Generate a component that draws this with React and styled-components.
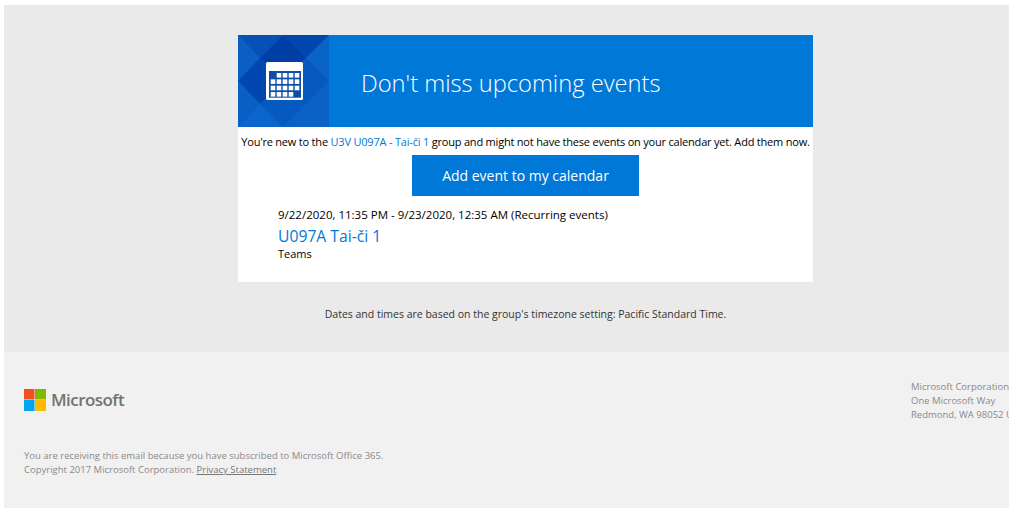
import React from 'react';
import styled, { createGlobalStyle } from 'styled-components';

const GlobalStyle = createGlobalStyle`
	html, body {
		margin: 0;
		padding: 0;
		background: #fff;
		overflow: hidden;
	}
	body {
		font-family: 'Open Sans', 'Noto Sans', sans-serif;
	}
`;

// the email is wider than the window, so its right side gets cut off
const Viewport = styled.div`
	width: 1005px;
	height: 503px;
	margin: 5px 0 0 4px;
	overflow: hidden;
`;

const Page = styled.div`
	width: 1043px;
	height: 503px;
	display: flex;
	flex-direction: column;
`;

const Main = styled.main`
	height: 347px;
	flex: none;
	background: #eaeaea;
	padding-top: 30px;
	box-sizing: border-box;
	display: flex;
	flex-direction: column;
	align-items: center;
`;

const Card = styled.section`
	width: 575px;
	height: 247px;
	background: #fff;
	display: flex;
	flex-direction: column;
	align-items: stretch;
`;

const Banner = styled.div`
	height: 92px;
	flex: none;
	background: #0078d7;
	display: flex;
	align-items: center;
`;

const Tile = styled.svg`
	width: 91px;
	height: 92px;
	flex: none;
	display: block;
`;

const Heading = styled.h1`
	margin: 3px 0 0 32px;
	font-size: 23.7px;
	font-weight: 300;
	color: #fff;
	white-space: nowrap;
`;

const Intro = styled.p`
	margin: 7px 0 0;
	font-size: 11px;
	letter-spacing: -0.2px;
	line-height: 16px;
	color: #000;
	text-align: center;
	white-space: nowrap;
`;

const GroupLink = styled.a`
	color: #0078d7;
	text-decoration: none;
`;

const AddButton = styled.a`
	width: 227px;
	height: 41px;
	margin: 5px auto 0;
	background: #0078d7;
	color: #fff;
	font-size: 14px;
	display: flex;
	align-items: center;
	justify-content: center;
`;

const EventBlock = styled.div`
	padding: 10px 0 0 40px;
`;

const EventTime = styled.div`
	font-size: 11.5px;
	line-height: 17px;
	color: #000;
`;

const EventTitle = styled.a`
	display: block;
	padding-top: 2px;
	font-size: 15.7px;
	line-height: 22px;
	color: #0078d7;
`;

const EventPlace = styled.div`
	font-size: 11px;
	line-height: 13px;
	color: #000;
`;

const ZoneNote = styled.p`
	margin: 25px 0 0;
	font-size: 10.5px;
	line-height: 15px;
	color: #333;
`;

const Footer = styled.footer`
	flex: 1;
	background: #f1f1f1;
	padding: 28px 0 0 20px;
`;

const FooterTop = styled.div`
	display: flex;
	justify-content: space-between;
	align-items: flex-start;
`;

const Logo = styled.div`
	display: flex;
	align-items: center;
	gap: 5px;
	margin-top: 8px;
	font-size: 17px;
	letter-spacing: -0.55px;
	font-weight: 600;
	color: #737373;
`;

const Address = styled.div`
	width: 136px;
	font-size: 9.5px;
	line-height: 14px;
	color: #8a8a8a;
	white-space: nowrap;
`;

const Legal = styled.p`
	margin: 27px 0 0;
	font-size: 9.5px;
	line-height: 14px;
	color: #8a8a8a;
`;

const PrivacyLink = styled.a`
	color: #777;
	text-decoration: underline;
`;

function BannerTile() {
	const cells = [];
	const rows = [
		[0, 1, 1, 1, 1],
		[1, 1, 1, 1, 1],
		[1, 1, 1, 1, 1],
		[1, 1, 1, 1, 0],
	];
	rows.forEach((row, r) =>
		row.forEach((on, c) => {
			if (on) cells.push(<rect key={r + '-' + c} x={32.7 + c * 6} y={38 + r * 6.35} width="4.6" height="4.6" fill="#fff" />);
		})
	);
	return (
		<Tile viewBox="0 0 91 92">
			<rect width="91" height="92" fill="#0a5ec4" />
			<polygon points="0,0 45,0 22,23" fill="#0650b6" />
			<polygon points="45,0 91,0 68,23" fill="#0046ad" />
			<polygon points="22,23 45,0 68,23 45,46" fill="#003da5" />
			<polygon points="0,0 22,23 0,46" fill="#0a5ec4" />
			<polygon points="0,46 22,23 45,46 22,69" fill="#0048b0" />
			<polygon points="68,23 91,0 91,46" fill="#0a64c8" />
			<polygon points="45,46 68,23 91,46 68,69" fill="#0858be" />
			<polygon points="0,46 22,69 0,92" fill="#0a5fc5" />
			<polygon points="22,69 45,46 68,69 45,92" fill="#0559bf" />
			<polygon points="91,46 68,69 91,92" fill="#0a62c7" />
			<polygon points="0,92 22,69 45,92" fill="#0a66ca" />
			<polygon points="45,92 68,69 91,92" fill="#0a62c7" />
			<rect x="28" y="27" width="37" height="38" rx="1.5" fill="#fff" />
			<rect x="31" y="36" width="32" height="26.7" fill="#0a4ea8" />
			{cells}
		</Tile>
	);
}

function MicrosoftMark() {
	return (
		<svg width="22" height="22" viewBox="0 0 22 22">
			<rect width="10.5" height="10.5" fill="#f25022" />
			<rect x="11" width="11" height="10.5" fill="#7fba00" />
			<rect y="11" width="10.5" height="11" fill="#00a4ef" />
			<rect x="11" y="11" width="11" height="11" fill="#ffb900" />
		</svg>
	);
}

export default function App() {
	return (
		<>
			<GlobalStyle />
			<Viewport>
				<Page>
					<Main>
						<Card>
							<Banner>
								<BannerTile />
								<Heading>Don't miss upcoming events</Heading>
							</Banner>
							<Intro>
								You're new to the <GroupLink>U3V U097A - Tai-či 1</GroupLink> group and might not have these events on your calendar yet. Add them now.
							</Intro>
							<AddButton>Add event to my calendar</AddButton>
							<EventBlock>
								<EventTime>9/22/2020, 11:35 PM - 9/23/2020, 12:35 AM (Recurring events)</EventTime>
								<EventTitle>U097A Tai-či 1</EventTitle>
								<EventPlace>Teams</EventPlace>
							</EventBlock>
						</Card>
						<ZoneNote>Dates and times are based on the group's timezone setting: Pacific Standard Time.</ZoneNote>
					</Main>
					<Footer>
						<FooterTop>
							<Logo>
								<MicrosoftMark />
								Microsoft
							</Logo>
							<Address>
								Microsoft Corporation
								<br />
								One Microsoft Way
								<br />
								Redmond, WA 98052 USA
							</Address>
						</FooterTop>
						<Legal>
							You are receiving this email because you have subscribed to Microsoft Office 365.
							<br />
							Copyright 2017 Microsoft Corporation. <PrivacyLink>Privacy Statement</PrivacyLink>
						</Legal>
					</Footer>
				</Page>
			</Viewport>
		</>
	);
}
